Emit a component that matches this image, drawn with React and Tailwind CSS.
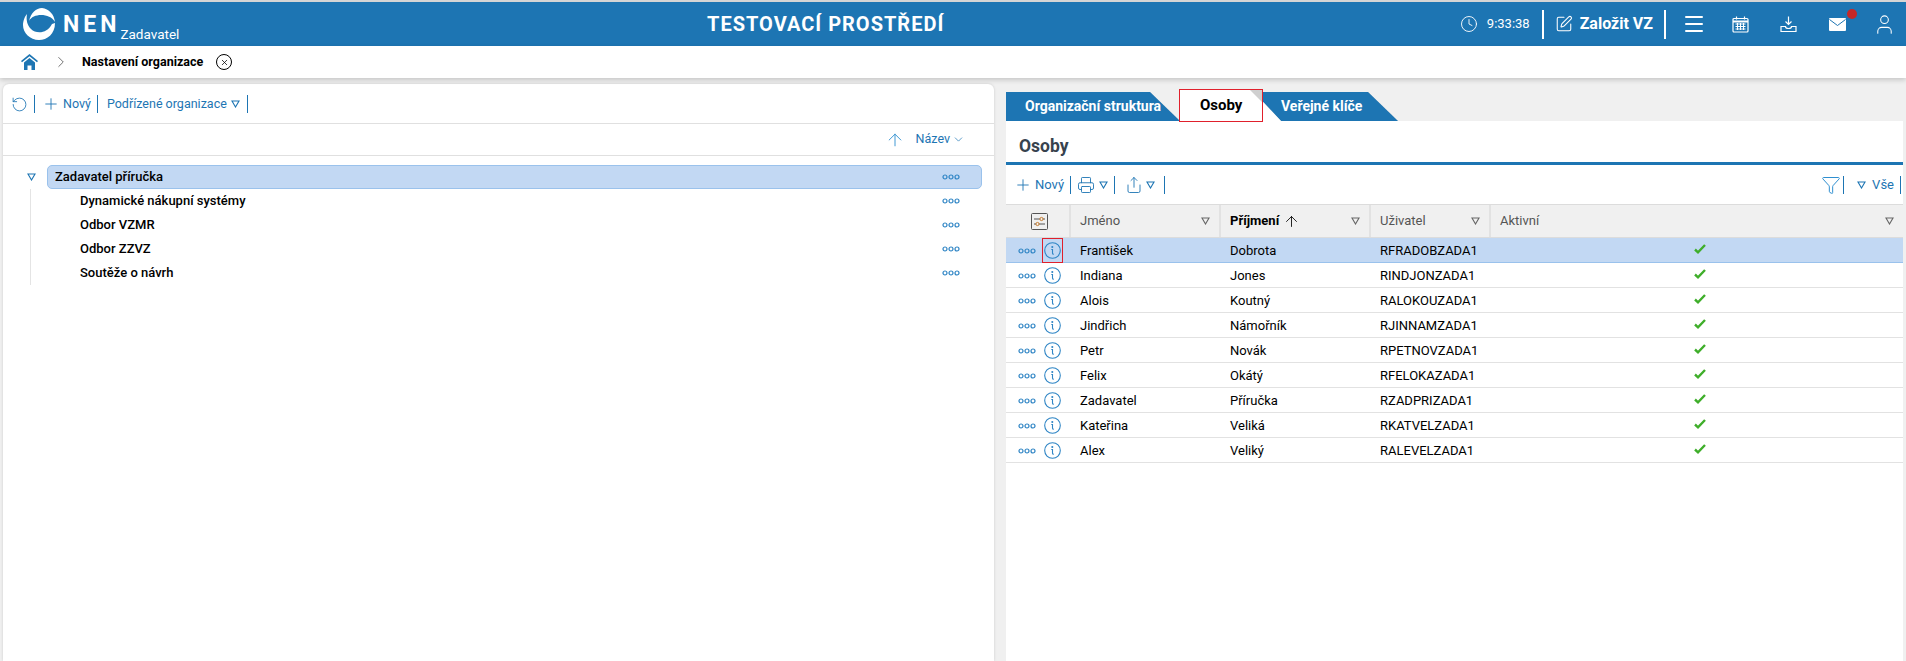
import React from 'react';
import { Clock, SquarePen, Menu, User, Plus, ChevronDown, ChevronRight, ArrowUp, RotateCcw, Printer, Share, Funnel, X } from 'lucide-react';

const people = [
  ['František', 'Dobrota', 'RFRADOBZADA1'],
  ['Indiana', 'Jones', 'RINDJONZADA1'],
  ['Alois', 'Koutný', 'RALOKOUZADA1'],
  ['Jindřich', 'Námořník', 'RJINNAMZADA1'],
  ['Petr', 'Novák', 'RPETNOVZADA1'],
  ['Felix', 'Okátý', 'RFELOKAZADA1'],
  ['Zadavatel', 'Příručka', 'RZADPRIZADA1'],
  ['Kateřina', 'Veliká', 'RKATVELZADA1'],
  ['Alex', 'Veliký', 'RALEVELZADA1'],
];

const children = ['Dynamické nákupní systémy', 'Odbor VZMR', 'Odbor ZZVZ', 'Soutěže o návrh'];

const Dots = () => (
  <svg width="18" height="6" viewBox="0 0 18 6" fill="none" stroke="#2f85c5" strokeWidth="1.2">
    <circle cx="3" cy="3" r="2" />
    <circle cx="9" cy="3" r="2" />
    <circle cx="15" cy="3" r="2" />
  </svg>
);

const Tri = ({ color = '#1d75b3' }) => (
  <svg width="9" height="8" viewBox="0 0 9 8" fill="none" stroke={color} strokeWidth="1.1">
    <path d="M1 1h7L4.500 7z" />
  </svg>
);

const Sep = () => <span className="h-[18px] w-px bg-[#1d75b3]" />;

const Logo = () => (
  <svg width="32" height="32" viewBox="0 0 32 32" fill="#fff">
    <path d="M6 13C8 5 13 0 19 0 26 1 31 6 32 14 29 9 24 7 18 7 13 7 8 9 6 13z" />
    <path d="M0 17C0 13 2 8 4 6 3 12 4 17 8 21 13 26 24 26 29 16L32 15C32 26 24 32 16 32 7 32 0 25 0 17z" />
  </svg>
);

const Calendar = () => (
  <svg width="17" height="17" viewBox="0 0 17 17" fill="none" stroke="#fff" strokeWidth="1.2">
    <rect x="1" y="2.500" width="15" height="13.500" rx="1" />
    <path d="M1 5.500h15" strokeWidth="2" />
    <path d="M4.500 0.500v3M12.500 0.500v3" />
    <path d="M3.500 8h10M3.500 10.500h10M3.500 13h10M5.500 7v7M8.500 7v7M11.500 7v7" strokeWidth="1" />
  </svg>
);

const Tray = () => (
  <svg width="17" height="17" viewBox="0 0 17 17" fill="none" stroke="#fff" strokeWidth="1.2">
    <path d="M8.500 0.500v8M5.500 5.500l3 3 3-3" />
    <path d="M1 10.500h4.500c0 1.500 1.500 2 3 2s3-.5 3-2H16v5H1z" />
  </svg>
);

const Mail = () => (
  <svg width="17" height="13" viewBox="0 0 17 13">
    <rect width="17" height="13" rx="1" fill="#fff" />
    <path d="M0.500 1.500l8 6 8-6" fill="none" stroke="#1d75b3" strokeWidth="1" />
  </svg>
);

const Home = () => (
  <svg width="17" height="16" viewBox="0 0 17 16" fill="#1d75b3">
    <path d="M8.500 0L17 7l-1 1.300L8.500 2.300 1 8.300 0 7z" />
    <path d="M3 8.500l5.500-4.500L14 8.500V16h-3.500v-4.500h-4V16H3z" />
  </svg>
);

const Sliders = () => (
  <svg width="17" height="17" viewBox="0 0 17 17" fill="none" stroke="#555" strokeWidth="1">
    <rect x="0.500" y="0.500" width="16" height="16" rx="1" />
    <path d="M3 6h11M3 11h11" stroke="#555" />
    <circle cx="10.500" cy="6" r="1.600" fill="#f0f0f0" stroke="#c77b2c" />
    <circle cx="6.500" cy="11" r="1.600" fill="#f0f0f0" stroke="#c77b2c" />
  </svg>
);

const Info = () => (
  <svg width="17" height="17" viewBox="0 0 17 17" fill="none" stroke="#2f85c5" strokeWidth="1.1">
    <circle cx="8.500" cy="8.500" r="7.800" />
    <path d="M7.300 7.500h1.200v3.500c0 1 .5 1.300 1.300 1" />
    <circle cx="8.300" cy="5" r="0.500" />
  </svg>
);

const Check = () => (
  <svg width="12" height="10" viewBox="0 0 12 10" fill="none" stroke="#3fae2a" strokeWidth="2.400">
    <path d="M1 5.500l3 2.800L11 1" />
  </svg>
);

const Tab = ({ label, active, className }) => (
  <div className={`relative whitespace-nowrap ${className}`}>
    <div className="absolute inset-0 left-[6px] bg-[#c9c9c9] [clip-path:polygon(0_0,calc(100%-30px)_0,100%_100%,0_100%)]" />
    <div className={`relative flex h-full items-center pr-[36px] font-bold [clip-path:polygon(0_0,calc(100%-30px)_0,100%_100%,0_100%)] ${active ? 'bg-white text-[15px] text-black' : 'bg-[#1d75b3] text-[14px] text-white'}`}>
      {label}
    </div>
  </div>
);

const App = () => {
  return (
    <div className="flex h-screen w-full flex-col overflow-hidden bg-[#f0f0f0] font-['Roboto',sans-serif] text-[13px] text-black">
      <div className="h-[2px] bg-[#d5d5d5]" />
      <header className="flex h-[44px] items-center bg-[#1d75b3] text-white">
        <div className="flex w-[707px] items-center pl-[23px]">
          <Logo />
          <span className="ml-[8px] text-[23px] font-bold tracking-[4px] leading-none">NEN</span>
          <span className="ml-[0px] mt-[21px] text-[13.500px] leading-none">Zadavatel</span>
        </div>
        <div className="flex-1 text-[20px] font-bold tracking-[1px]">TESTOVACÍ PROSTŘEDÍ</div>
        <div className="flex items-center pr-[10px]">
          <Clock size={18} strokeWidth={1.2} />
          <span className="ml-[9px] text-[13px]">9:33:38</span>
          <span className="ml-[12px] h-[29px] w-[2px] bg-white" />
          <SquarePen size={18} strokeWidth={1.4} className="ml-[11px]" />
          <span className="ml-[7px] text-[16px] font-bold">Založit VZ</span>
          <span className="ml-[11px] h-[29px] w-[2px] bg-white" />
          <Menu size={24} strokeWidth={2} className="ml-[16px]" />
          <span className="ml-[26px]"><Calendar /></span>
          <span className="ml-[31px]"><Tray /></span>
          <span className="relative ml-[32px] flex"><Mail />
            <span className="absolute -right-[11px] -top-[9px] h-[10px] w-[10px] rounded-full bg-[#c62828]" />
          </span>
          <User size={23} strokeWidth={1.1} className="ml-[27px]" />
        </div>
      </header>

      <div className="z-10 flex h-[32px] items-center bg-white pl-[21px] shadow-[0_2px_5px_rgba(0,0,0,0.18)]">
        <Home />
        <ChevronRight size={18} strokeWidth={1} className="ml-[14px] text-[#444]" />
        <span className="ml-[12px] text-[12.500px] font-bold">Nastavení organizace</span>
        <span className="ml-[13px] flex h-[16px] w-[16px] items-center justify-center rounded-full border border-black">
          <X size={9} strokeWidth={2} />
        </span>
      </div>

      <div className="flex min-h-0 flex-1 pl-[3px] pr-[3px] pt-[6px]">
        <section className="w-[991px] rounded-t-[6px] bg-white shadow-[0_0_3px_rgba(0,0,0,0.15)]">
          <div className="flex h-[40px] items-center gap-[6px] border-b border-[#e0e0e0] pl-[8px] pt-[1px] text-[12.500px] text-[#1d75b3]">
            <RotateCcw size={17} strokeWidth={1.2} />
            <Sep />
            <Plus size={18} strokeWidth={1.2} className="ml-[1px]" />
            <span className="-ml-[3px]">Nový</span>
            <Sep />
            <span className="ml-[3px] flex items-center gap-[4px]">Podřízené organizace <Tri /></span>
            <span className="ml-[1px] flex"><Sep /></span>
          </div>
          <div className="flex h-[32px] items-center justify-end border-b border-[#e0e0e0] pr-[29px] text-[12.500px] text-[#1d75b3]">
            <ArrowUp size={20} strokeWidth={1.1} className="text-[#2f8fd0]" />
            <span className="ml-[11px]">Název</span>
            <ChevronDown size={13} strokeWidth={1.3} className="ml-[2px]" />
          </div>
          <div className="pl-[24px] pr-[12px] pt-[9px]">
            <div className="flex h-[24px] items-center">
              <Tri />
              <div className="ml-[11px] flex h-[24px] flex-1 items-center justify-between rounded-[5px] border border-[#9ac2ec] bg-[#c2d8f3] pl-[7px] pr-[21px] text-[13px] font-medium">
                Zadavatel příručka
                <Dots />
              </div>
            </div>
            <div className="ml-[3px] border-l border-[#e4e4e4]">
              {children.map((name) => (
                <div key={name} className="flex h-[24px] items-center justify-between pl-[49px] pr-[22px] text-[13px] font-medium">
                  {name}
                  <Dots />
                </div>
              ))}
            </div>
          </div>
        </section>

        <section className="ml-[12px] flex min-w-0 flex-1 flex-col">
          <div className="flex h-[37px] items-end">
            <div className="z-10">
              <Tab label="Organizační struktura" className="h-[29px] w-[174px] [&>div:last-child]:pl-[19px]" />
            </div>
            <div className="relative z-30 -ml-[1px]">
              <Tab label="Osoby" active className="h-[32px] w-[102px] [&>div:last-child]:pl-[21px]" />
              <span className="absolute left-0 top-0 h-[33px] w-[84px] border border-[#e0202c]" />
              <span className="absolute left-[71px] top-[1px] h-0 w-0 border-l-[12px] border-t-[12px] border-l-transparent border-t-[#cfcfcf]" />
            </div>
            <div className="z-20 -ml-[19px]">
              <Tab label="Veřejné klíče" className="h-[29px] w-[136px] [&>div:last-child]:pl-[19px]" />
            </div>
          </div>
          <div className="flex min-h-0 flex-1 flex-col bg-white">
            <h2 className="h-[44px] border-b-[3px] border-[#1d75b3] pl-[13px] pt-[12px] text-[17.500px] font-bold leading-[26px] text-[#37424e]">Osoby</h2>
            <div className="flex h-[39px] items-center gap-[6px] pl-[8px] pr-[2px] text-[13px] text-[#1d75b3]">
              <Plus size={18} strokeWidth={1.2} />
              <span className="-ml-[3px]">Nový</span>
              <Sep />
              <Printer size={18} strokeWidth={1.2} />
              <span className="-ml-[2px] flex"><Tri /></span>
              <Sep />
              <Share size={18} strokeWidth={1.2} className="ml-[4px]" />
              <span className="-ml-[3px] flex"><Tri /></span>
              <span className="ml-[3px] flex"><Sep /></span>
              <span className="flex-1" />
              <Funnel size={20} strokeWidth={1.2} className="text-[#2f8fd0]" />
              <span className="-ml-[4px] flex"><Sep /></span>
              <span className="ml-[7px] flex"><Tri /></span>
              <span>Vše</span>
              <Sep />
            </div>
            <div className="grid h-[34px] grid-cols-[65px_150px_150px_120px_1fr] border-y border-[#dcdcdc] bg-[#f0f0f0] text-[13px] text-[#555]">
              <div className="flex items-center justify-center border-r-2 border-[#e2e2e2] pl-[3px]"><Sliders /></div>
              <div className="flex items-center justify-between border-r-2 border-[#e2e2e2] pl-[9px] pr-[9px]">Jméno <Tri color="#666" /></div>
              <div className="flex items-center justify-between border-r-2 border-[#e2e2e2] pl-[9px] pr-[9px]">
                <span className="flex items-center gap-[4px] font-bold text-black">Příjmení <ArrowUp size={17} strokeWidth={1.2} /></span>
                <Tri color="#666" />
              </div>
              <div className="flex items-center justify-between border-r-2 border-[#e2e2e2] pl-[9px] pr-[9px]">Uživatel <Tri color="#666" /></div>
              <div className="flex items-center justify-between pl-[9px] pr-[9px]">Aktivní <Tri color="#666" /></div>
            </div>
            {people.map((p, i) => (
              <div key={p[2]} className={`grid h-[25px] grid-cols-[65px_150px_150px_120px_1fr] items-center border-b text-[13px] ${i === 0 ? 'border-[#9ac2ec] bg-[#c2d8f3]' : 'border-[#e2e2e2]'}`}>
                <div className="flex items-center pl-[12px]">
                  <Dots />
                  <span className={`relative ml-[6px] flex h-[25px] w-[21px] items-center justify-center ${i === 0 ? 'border border-[#e0202c]' : ''}`}><Info /></span>
                </div>
                <div className="pl-[9px]">{p[0]}</div>
                <div className="pl-[9px]">{p[1]}</div>
                <div className="pl-[9px]">{p[2]}</div>
                <div className="flex justify-center pl-[5px] pb-[3px]"><Check /></div>
              </div>
            ))}
          </div>
        </section>
      </div>
    </div>
  );
};

export default App;
